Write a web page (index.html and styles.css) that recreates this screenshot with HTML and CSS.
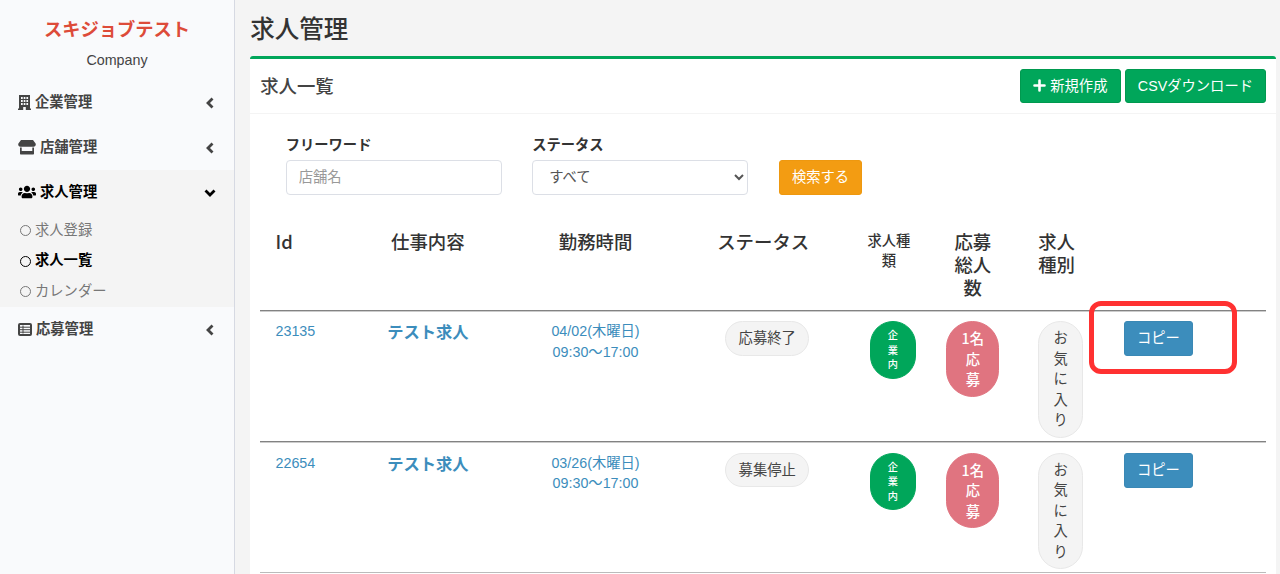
FILE: index.html
```html
<!DOCTYPE html>
<html lang="ja">
<head>
    <meta charset="UTF-8">
    <title>求人管理</title>
    <link rel="stylesheet" href="styles.css">
</head>
<body>
<aside class="sidebar">
    <div class="brand">スキジョブテスト</div>
    <div class="role">Company</div>
    <ul class="menu">
        <li>
            <a class="menu-link" href="#">
                <svg class="icon" width="13" height="15" viewBox="0 0 13 15"><path fill="currentColor" fill-rule="evenodd" d="M1 0h11v13.500h1V15H7.800v-3H5.200v3H0v-1.500h1zM3 2v2h1.700V2zm2.700 0v2h1.700V2zm2.700 0v2h1.700V2zM3 5v2h1.700V5zm2.700 0v2h1.700V5zm2.700 0v2h1.700V5zM3 8v2h1.700V8zm2.700 0v2h1.700V8zm2.700 0v2h1.700V8z"/></svg>
                <span>企業管理</span>
                <svg class="arrow" width="8" height="12" viewBox="0 0 8 12"><path d="M6.500 1.500L2 6l4.500 4.500"/></svg>
            </a>
        </li>
        <li>
            <a class="menu-link" href="#">
                <svg class="icon" width="18" height="15" viewBox="0 0 18 15"><path fill="currentColor" d="M3 0h12l2.600 3.500c.6 1.600-.3 3.200-2 3.200H2.400C.7 6.700-.2 5.100.4 3.500zM2 7.500h1.700V11h10.600V7.500H16v6c0 .6-.4 1-1 1H3c-.6 0-1-.4-1-1z"/></svg>
                <span>店舗管理</span>
                <svg class="arrow" width="8" height="12" viewBox="0 0 8 12"><path d="M6.500 1.500L2 6l4.500 4.500"/></svg>
            </a>
        </li>
        <li class="active">
            <a class="menu-link" href="#">
                <svg class="icon" width="18" height="14" viewBox="0 32 640 448"><path fill="currentColor" d="M96 224c35 0 64-29 64-64s-29-64-64-64-64 29-64 64 29 64 64 64zm448 0c35 0 64-29 64-64s-29-64-64-64-64 29-64 64 29 64 64 64zm32 32h-64c-18 0-34 7-45 19 40 22 69 62 75 109h66c18 0 32-14 32-32v-32c0-35-29-64-64-64zm-256 0c62 0 112-50 112-112S382 32 320 32 208 82 208 144s50 112 112 112zm77 32h-8c-21 10-44 16-69 16s-48-6-69-16h-8c-64 0-115 52-115 115v29c0 27 21 48 48 48h288c27 0 48-21 48-48v-29c0-63-51-115-115-115zm-224-13c-11-12-27-19-45-19H64c-35 0-64 29-64 64v32c0 18 14 32 32 32h66c6-47 35-87 75-109z"/></svg>
                <span>求人管理</span>
                <svg class="arrow arrow-down" width="12" height="8" viewBox="0 0 12 8"><path d="M1.500 1.500L6 6l4.500-4.500"/></svg>
            </a>
            <ul class="submenu">
                <li><a href="#"><i class="dot"></i>求人登録</a></li>
                <li class="current"><a href="#"><i class="dot"></i>求人一覧</a></li>
                <li><a href="#"><i class="dot"></i>カレンダー</a></li>
            </ul>
        </li>
        <li class="last">
            <a class="menu-link" href="#">
                <svg class="icon" width="14" height="13" viewBox="0 0 14 13"><rect x="1" y="1" width="12" height="11" rx="1" fill="none" stroke="currentColor" stroke-width="2"/><path d="M2 4.200h10M2 6.700h10M2 9.200h10M5 2.500v8" fill="none" stroke="currentColor" stroke-width="1"/></svg>
                <span>応募管理</span>
                <svg class="arrow" width="8" height="12" viewBox="0 0 8 12"><path d="M6.500 1.500L2 6l4.500 4.500"/></svg>
            </a>
        </li>
    </ul>
</aside>

<main class="content">
    <h1 class="page-title">求人管理</h1>
    <section class="box">
        <div class="box-header">
            <h2 class="box-title">求人一覧</h2>
            <div class="tools">
                <a class="btn btn-success" href="#"><svg class="plus" width="13" height="13" viewBox="0 0 13 13"><path d="M6.500 1.500v10M1.500 6.500h10"/></svg>新規作成</a>
                <a class="btn btn-success" href="#">CSVダウンロード</a>
            </div>
        </div>
        <form class="search">
            <div class="field">
                <label for="word">フリーワード</label>
                <input class="control" id="word" type="text" placeholder="店舗名">
            </div>
            <div class="field">
                <label for="status">ステータス</label>
                <select class="control" id="status">
                    <option>すべて</option>
                </select>
            </div>
            <button class="btn btn-warning" type="button">検索する</button>
        </form>
        <div class="list">
            <div class="row head">
                <div class="id">Id</div>
                <div>仕事内容</div>
                <div>勤務時間</div>
                <div>ステータス</div>
                <div class="small">求人種類</div>
                <div>応募総人数</div>
                <div>求人種別</div>
                <div></div>
            </div>
            <div class="row">
                <div class="id"><a href="#">23135</a></div>
                <div class="job"><a href="#">テスト求人</a></div>
                <div><a href="#">04/02(木曜日)<br>09:30〜17:00</a></div>
                <div><span class="pill shift">応募終了</span></div>
                <div><span class="pill pill-green shift">企業内</span></div>
                <div><span class="pill pill-pink">1名応募</span></div>
                <div><span class="pill shift">お気に入り</span></div>
                <div class="action">
                    <a class="btn btn-primary" href="#">コピー</a>
                    <span class="marker"></span>
                </div>
            </div>
            <div class="row">
                <div class="id"><a href="#">22654</a></div>
                <div class="job"><a href="#">テスト求人</a></div>
                <div><a href="#">03/26(木曜日)<br>09:30〜17:00</a></div>
                <div><span class="pill shift">募集停止</span></div>
                <div><span class="pill pill-green shift">企業内</span></div>
                <div><span class="pill pill-pink">1名応募</span></div>
                <div><span class="pill shift">お気に入り</span></div>
                <div class="action">
                    <a class="btn btn-primary" href="#">コピー</a>
                </div>
            </div>
        </div>
    </section>
</main>
</body>
</html>
```
FILE: styles.css
```css
* {
    box-sizing: border-box;
    margin: 0;
    padding: 0;
}
html, body {
    height: 100%;
}
body {
    display: flex;
    background: #f4f4f4;
    color: #333;
    font-family: "Liberation Sans", "Noto Sans CJK JP", sans-serif;
    font-size: 14.3px;
    line-height: 20.45px;
}
ul {
    list-style: none;
}
a {
    color: #3c8dbc;
    text-decoration: none;
}

/* サイドバー */
.sidebar {
    flex: 0 0 235px;
    height: 100%;
    padding-top: 17px;
    background: #f9fafc;
    border-right: 1px solid #d6d9e2;
}
.brand {
    color: #dd4b39;
    font-size: 18.3px;
    font-weight: bold;
    line-height: 26px;
    text-align: center;
}
.role {
    margin-top: 7px;
    color: #444;
    text-align: center;
}
.menu {
    margin-top: 9.5px;
}
.menu-link {
    display: flex;
    align-items: center;
    height: 45px;
    padding: 0 18px;
    color: #444;
    font-weight: bold;
}
.icon {
    margin-right: 4px;
}
.arrow {
    margin: 2px 2px 0 auto;
    fill: none;
    stroke: currentColor;
    stroke-width: 2.8;
}
.arrow-down {
    margin-right: 0;
}
.active {
    padding-bottom: 1px;
    background: #f4f4f4;
}
.active .menu-link {
    color: #000;
}
.submenu a {
    display: flex;
    align-items: center;
    height: 30.5px;
    padding-left: 20px;
    color: #777;
}
.submenu .current a {
    color: #000;
    font-weight: bold;
}
.last .menu-link {
    height: 43.5px;
}
.dot {
    width: 11px;
    height: 11px;
    margin: 1px 4px 0 0;
    border: 1px solid currentColor;
    border-radius: 50%;
}

/* メイン */
.content {
    display: flex;
    flex-direction: column;
    flex: 1;
    height: 100%;
    padding: 15px 3.8px 0 15.2px;
}
.page-title {
    height: 41px;
    padding-top: 1px;
    font-size: 24.5px;
    font-weight: 500;
    line-height: 28px;
}
.box {
    flex: 1;
    background: #fff;
    border-top: 3px solid #00a65a;
    border-radius: 3px 3px 0 0;
}
.box-header {
    display: flex;
    justify-content: space-between;
    align-items: center;
    height: 55px;
    padding: 0 10px;
    border-bottom: 1px solid #f4f4f4;
}
.box-title {
    padding-top: 2px;
    color: #444;
    font-size: 18.4px;
    font-weight: 500;
}
.tools {
    display: flex;
    gap: 4px;
}
.btn {
    display: inline-block;
    height: 34.7px;
    padding: 6px 12.2px;
    border: 1px solid;
    border-radius: 3px;
    color: #fff;
    font-family: inherit;
    font-size: 14.3px;
    line-height: 20.45px;
}
.btn-success {
    background: #00a65a;
    border-color: #00994f;
}
.btn-warning {
    background: #f39c12;
    border-color: #ee980f;
}
.btn-primary {
    background: #3c8dbc;
    border-color: #3a88b5;
}
.plus {
    margin-right: 4px;
    vertical-align: -1px;
    fill: none;
    stroke: #fff;
    stroke-width: 2.6;
    stroke-linecap: round;
}

/* 検索フォーム */
.search {
    display: flex;
    align-items: flex-end;
    gap: 30.5px;
    padding: 20px 35.5px 0;
}
.field {
    width: 216px;
}
.field label {
    display: block;
    position: relative;
    top: 1px;
    margin-bottom: 5.5px;
    font-weight: bold;
}
.control {
    display: block;
    width: 100%;
    height: 35px;
    padding: 6px 12px;
    background: #fff;
    border: 1px solid #dcdfe6;
    border-radius: 4px;
    color: #555;
    font-family: inherit;
    font-size: 14.3px;
}
select.control {
    padding-right: 4px;
}
.control::placeholder {
    color: #999;
}

/* 求人リスト */
.list {
    padding: 25px 10px 0;
}
.row {
    display: grid;
    grid-template-columns: 1fr 2fr 2fr 2fr 1fr 1fr 1fr 2fr;
    height: 131.5px;
    padding-top: 11.5px;
    background: linear-gradient(#777, #999) top / 100% 1.5px no-repeat;
    text-align: center;
}
.row:last-child {
    height: 132px;
    border-bottom: 1px solid #bbb;
}
.row > div {
    padding: 0 15.3px;
}
.row > .id {
    text-align: left;
}
.head {
    height: 90px;
    padding-top: 10px;
    background: none;
    font-family: "Noto Sans CJK JP", sans-serif;
    font-size: 18.4px;
    font-weight: 500;
    line-height: 23px;
}
.head .small {
    font-size: 14.3px;
    line-height: 20.45px;
}
.job {
    font-size: 16.3px;
    font-weight: bold;
    line-height: 22px;
}
.pill {
    display: inline-block;
    padding: 6px 12.3px;
    background: #f4f4f4;
    border: 1px solid #e8e8e8;
    border-radius: 27px;
    color: #444;
}
.shift {
    margin-left: 8px;
}
.pill-green {
    padding: 6px 16px;
    background: #00a65a;
    border-color: #00a65a;
    color: #fff;
    font-family: "Noto Sans CJK JP", sans-serif;
    font-size: 10.2px;
    font-weight: 500;
    line-height: 14.5px;
}
.pill-pink {
    background: #e07480;
    border-color: #e07480;
    color: #fff;
    font-family: "Noto Sans CJK JP", sans-serif;
    font-weight: 500;
}
.row > .action {
    position: relative;
    padding-left: 25.3px;
    text-align: left;
}
/* コピーボタンを囲む赤枠 */
.marker {
    position: absolute;
    top: -20.5px;
    left: -9.5px;
    width: 148px;
    height: 73px;
    border: 5px solid #ff3131;
    border-radius: 12px;
}
```
